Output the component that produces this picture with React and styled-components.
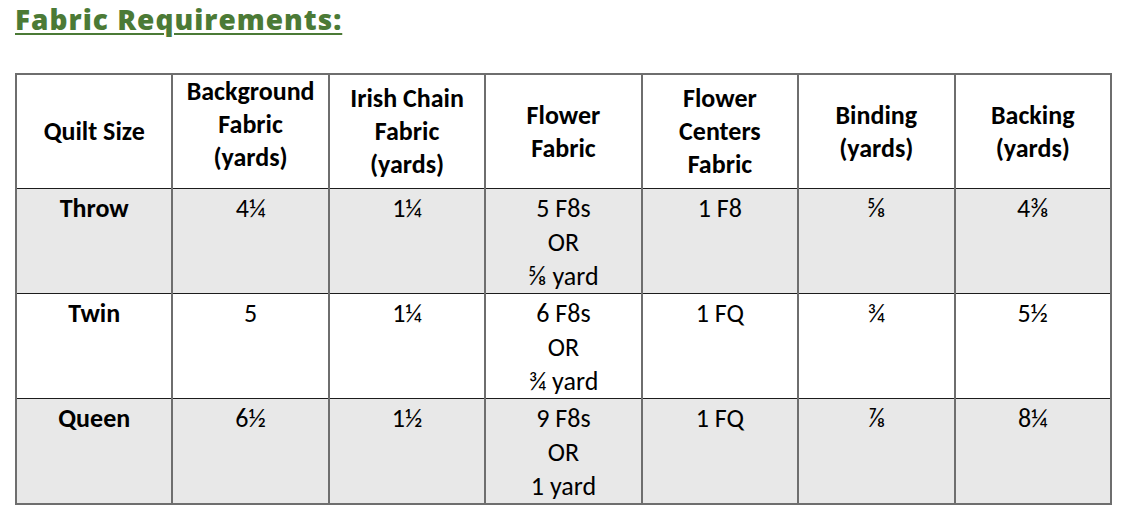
import React from 'react';
import styled, { createGlobalStyle } from 'styled-components';

const GlobalStyle = createGlobalStyle`
    body {
        margin: 0;
        background: #ffffff;
        font-family: Carlito, Lato, "Open Sans", sans-serif;
        color: #000;
    }
`;

const Page = styled.div`
    width: 1130px;
    height: 522px;
    padding: 0 0 0 15px;
    box-sizing: border-box;
`;

const Title = styled.h2`
    margin: 0;
    padding-top: 0;
    height: 73px;
    box-sizing: border-box;
    font-family: "Open Sans", sans-serif;
    font-weight: 800;
    font-size: 28px;
    line-height: 38px;
    letter-spacing: 1px;
    color: #4b7a36;
    text-decoration: underline;
    text-decoration-thickness: 2px;
    text-underline-offset: 3px;
`;

const Table = styled.table`
    border-collapse: collapse;
    width: 1097px;
    table-layout: fixed;
    border: 2px solid #6e6e6e;
`;

const HeadCell = styled.th`
    height: 99px;
    padding: ${(p) => (p.$lift ? '0 4px 14px' : '7px 4px')};
    border-left: 2px solid #6e6e6e;
    border-right: 2px solid #6e6e6e;
    font-size: 26px;
    font-weight: 700;
    line-height: 33px;
    text-align: center;
    vertical-align: middle;
    background: #ffffff;
`;

const Row = styled.tr`
    background: ${(p) => (p.$shaded ? '#e8e8e8' : '#ffffff')};
    border-top: 1px solid #1c1c1c;
`;

const Cell = styled.td`
    height: 102px;
    padding: 2px 4px 0;
    border-left: 2px solid #6e6e6e;
    border-right: 2px solid #6e6e6e;
    font-size: 26px;
    font-weight: ${(p) => (p.$bold ? 700 : 400)};
    line-height: 34px;
    text-align: center;
    vertical-align: top;
`;

const headers = [
    { lines: ['Quilt Size'] },
    { lines: ['Background', 'Fabric', '(yards)'], lift: true },
    { lines: ['Irish Chain', 'Fabric', '(yards)'] },
    { lines: ['Flower', 'Fabric'] },
    { lines: ['Flower', 'Centers', 'Fabric'] },
    { lines: ['Binding', '(yards)'] },
    { lines: ['Backing', '(yards)'] },
];

const rows = [
    { size: 'Throw', bg: '4¼', chain: '1¼', flower: ['5 F8s', 'OR', '⅝ yard'], centers: '1 F8', binding: '⅝', backing: '4⅜', shaded: true },
    { size: 'Twin', bg: '5', chain: '1¼', flower: ['6 F8s', 'OR', '¾ yard'], centers: '1 FQ', binding: '¾', backing: '5½' },
    { size: 'Queen', bg: '6½', chain: '1½', flower: ['9 F8s', 'OR', '1 yard'], centers: '1 FQ', binding: '⅞', backing: '8¼', shaded: true },
];

const Lines = ({ lines }) =>
    lines.map((l, i) => (
        <React.Fragment key={i}>
            {i > 0 && <br />}
            {l}
        </React.Fragment>
    ));

const App = () => {
    return (
        <Page>
            <GlobalStyle />
            <Title>Fabric Requirements:</Title>
            <Table>
                <thead>
                    <tr>
                        {headers.map((h, i) => (
                            <HeadCell key={i} $lift={h.lift}>
                                <Lines lines={h.lines} />
                            </HeadCell>
                        ))}
                    </tr>
                </thead>
                <tbody>
                    {rows.map((r) => (
                        <Row key={r.size} $shaded={r.shaded}>
                            <Cell $bold>{r.size}</Cell>
                            <Cell>{r.bg}</Cell>
                            <Cell>{r.chain}</Cell>
                            <Cell>
                                <Lines lines={r.flower} />
                            </Cell>
                            <Cell>{r.centers}</Cell>
                            <Cell>{r.binding}</Cell>
                            <Cell>{r.backing}</Cell>
                        </Row>
                    ))}
                </tbody>
            </Table>
        </Page>
    );
};

export default App;
